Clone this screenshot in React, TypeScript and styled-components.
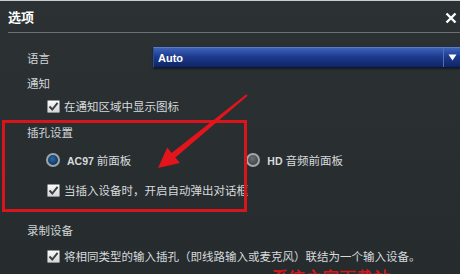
import React from "react";
import styled, { createGlobalStyle } from "styled-components";

const Global = createGlobalStyle`
  html, body { margin: 0; padding: 0; background: #282d30; overflow: hidden; }
  * { box-sizing: border-box; }
`;

const Window = styled.div`
  position: relative;
  width: 460px;
  height: 274px;
  overflow: hidden;
  background: linear-gradient(180deg, #2c3234 0%, #262b2e 100%);
  border-top: 1px solid #c9cdce;
  font-family: "Noto Sans CJK SC", "Noto Sans", sans-serif;
  color: #d3d7d9;
  font-size: 11.5px;
`;

const TitleBar = styled.div`
  margin-left: 8px;
  height: 32px;
  display: flex;
  align-items: center;
  justify-content: space-between;
  border-bottom: 1px solid #6a7073;
  padding-right: 3px;
`;

const Title = styled.div`
  font-size: 13px;
  font-weight: 700;
  color: #ffffff;
  margin-top: -1px;
`;

const Close = styled.div`
  width: 12px;
  height: 12px;
  display: flex;
  margin-top: 2px;
`;

const Content = styled.div`
  display: flex;
  flex-direction: column;
`;

const Row = styled.div<{ $top: number; $h: number; $indent: number }>`
  display: flex;
  align-items: center;
  height: ${(p) => p.$h}px;
  margin-top: ${(p) => p.$top}px;
  padding-left: ${(p) => p.$indent}px;
`;

const Label = styled.div<{ $w?: number }>`
  width: ${(p) => (p.$w ? `${p.$w}px` : "auto")};
  white-space: nowrap;
  color: #d0d4d6;
`;

const Select = styled.div`
  flex: 1;
  height: 21px;
  display: flex;
  align-items: center;
  background: linear-gradient(180deg, #3d63b8 0%, #1d3b8e 45%, #0e2463 100%);
  border-top: 1px solid #5b7ccc;
  border-bottom: 1px solid #0a163c;
  border-left: 1px solid #2a4a9a;
  box-shadow: 0 1px 2px rgba(0, 0, 0, 0.5);
`;

const SelectText = styled.div`
  flex: 1;
  padding-left: 4px;
  font-family: "Liberation Sans", "Noto Sans", sans-serif;
  font-weight: 700;
  font-size: 11px;
  color: #ffffff;
`;

const SelectButton = styled.div`
  width: 17px;
  height: 100%;
  display: flex;
  align-items: center;
  justify-content: center;
  border-left: 1px solid #4f6db8;
`;

const CheckBox = styled.div`
  width: 13px;
  height: 13px;
  border: 1px solid #8d9295;
  border-radius: 1px;
  background: linear-gradient(180deg, #fbfbfb 0%, #d6d6d6 100%);
  display: flex;
  align-items: center;
  justify-content: center;
  margin-right: 4px;
  flex: none;
`;

const Radio = styled.div<{ $on?: boolean }>`
  width: 14px;
  height: 14px;
  border-radius: 50%;
  border: 2px solid ${(p) => (p.$on ? "#9ea5aa" : "#a3a7aa")};
  background: ${(p) =>
    p.$on
      ? "radial-gradient(circle at 45% 40%, #2d6aa8 0%, #153d6a 60%, #0b2644 100%)"
      : "radial-gradient(circle at 45% 35%, #6b7175 0%, #43494c 70%, #363b3e 100%)"};
  margin-right: 7px;
  flex: none;
`;

const OptText = styled.span`
  white-space: nowrap;
  color: #d6dadc;
`;

const Latin = styled.span`
  font-family: "Liberation Sans", "Noto Sans", sans-serif;
  font-weight: 700;
  font-size: 10.5px;
  margin-right: 3px;
`;

const Spacer = styled.div<{ $w: number }>`
  width: ${(p) => p.$w}px;
  flex: none;
`;

const Highlight = styled.div`
  position: absolute;
  left: 2px;
  top: 119px;
  width: 245px;
  height: 92px;
  border: 3px solid #d8151b;
  pointer-events: none;
`;

const Overlay = styled.svg`
  position: absolute;
  left: 0;
  top: 0;
  pointer-events: none;
`;

const Watermark = styled.div`
  position: absolute;
  left: 272px;
  top: 267px;
  font-family: "Liberation Sans", sans-serif;
  font-weight: 700;
  font-size: 16px;
  color: #d01a1a;
  white-space: nowrap;
  letter-spacing: 1px;
`;

const Check = () => (
  <svg width="11" height="11" viewBox="0 0 11 11">
    <path d="M1.5 5.5 L4.3 8.5 L9.6 1.8" fill="none" stroke="#3a3f42" strokeWidth="2" />
  </svg>
);

export default function App() {
  return (
    <>
      <Global />
      <Window>
        <TitleBar>
          <Title>选项</Title>
          <Close>
            <svg width="12" height="12" viewBox="0 0 12 12">
              <path d="M1.5 1.5 L10.5 10.5 M10.5 1.5 L1.5 10.5" stroke="#ffffff" strokeWidth="2.4" />
            </svg>
          </Close>
        </TitleBar>
        <Content>
          <Row $top={14} $h={21} $indent={27}>
            <Label $w={126}>语言</Label>
            <Select>
              <SelectText>Auto</SelectText>
              <SelectButton>
                <svg width="9" height="7" viewBox="0 0 9 7">
                  <path d="M0.5 0.5 L8.5 0.5 L4.5 6.5 Z" fill="#ffffff" />
                </svg>
              </SelectButton>
            </Select>
          </Row>
          <Row $top={8} $h={14} $indent={27}>
            <Label>通知</Label>
          </Row>
          <Row $top={9} $h={14} $indent={47}>
            <CheckBox><Check /></CheckBox>
            <OptText>在通知区域中显示图标</OptText>
          </Row>
          <Row $top={12} $h={14} $indent={27}>
            <Label>插孔设置</Label>
          </Row>
          <Row $top={13} $h={16} $indent={46}>
            <Radio $on />
            <OptText><Latin>AC97</Latin>前面板</OptText>
            <Spacer $w={115} />
            <Radio />
            <OptText><Latin>HD</Latin>音频前面板</OptText>
          </Row>
          <Row $top={15} $h={14} $indent={47}>
            <CheckBox><Check /></CheckBox>
            <OptText>当插入设备时，开启自动弹出对话框</OptText>
          </Row>
          <Row $top={26} $h={14} $indent={27}>
            <Label>录制设备</Label>
          </Row>
          <Row $top={12} $h={14} $indent={47}>
            <CheckBox><Check /></CheckBox>
            <OptText>将相同类型的输入插孔（即线路输入或麦克风）联结为一个输入设备。</OptText>
          </Row>
        </Content>
        <Highlight />
        <Overlay width="460" height="274" viewBox="0 0 460 274">
          <polygon
            points="246.4,93.2 171.6,151.9 167.2,146.6 158,167 179.9,162 175.4,156.6 247.6,94.8"
            fill="#e3141b"
          />
        </Overlay>
        <Watermark>系统之家下载站</Watermark>
      </Window>
    </>
  );
}
